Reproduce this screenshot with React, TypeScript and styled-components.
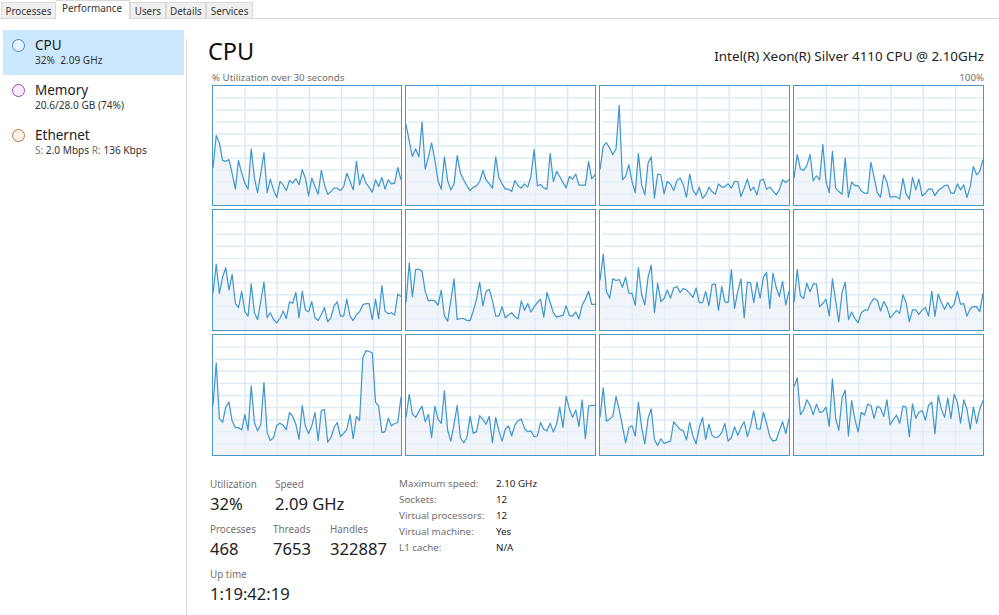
import * as React from 'react';
import styled, { createGlobalStyle } from 'styled-components';

const GlobalStyle = createGlobalStyle`
    html, body {
        margin: 0;
        padding: 0;
        background: #fff;
    }
    body {
        font-family: "Noto Sans", "Open Sans", "Liberation Sans", sans-serif;
    }
`;

const Dim = styled.span`
    color: #777;
`;

// sample values read off the reference, in thirds of a pixel from the top of each crop
const CORES: { base: number; ys: number[] }[] = [
    { base: 375, ys: [265,168,190,242,245,240,280,328,242,280,310,328,208,295,338,280,220,338,298,330,353,305,315,332,302,310,297,315,270,295,348,295,320,343,272,315,343,335,325,325,332,320,280,305,330,245,315,283,310,322,337,300,320,293,328,300,312,310,263,300] },
    { base: 375, ys: [135,185,230,208,232,128,268,232,190,240,303,328,232,303,330,312,228,280,300,318,332,322,318,305,272,300,312,325,232,293,312,328,328,335,302,318,325,312,322,290,210,318,314,324,328,222,305,275,290,308,324,290,298,283,316,316,316,246,297,285] },
    { base: 375, ys: [270,200,190,205,225,208,78,300,290,255,305,338,222,315,345,250,232,355,283,285,342,305,313,332,302,295,315,352,283,330,345,322,355,345,322,335,343,312,322,320,312,325,305,305,350,325,298,332,322,345,303,298,328,322,333,345,330,300,308,300] },
    { base: 375, ys: [295,225,268,272,258,225,303,288,300,195,305,338,215,325,335,343,235,352,307,317,317,333,340,340,248,293,338,352,285,305,352,350,350,357,296,342,358,293,330,298,348,340,328,327,347,332,325,317,316,340,340,312,330,315,353,320,260,285,275,240] },
    { base: 376, ys: [268,182,268,220,192,258,212,297,310,262,322,335,240,325,345,290,235,340,325,345,355,342,320,342,293,297,265,340,262,317,322,292,340,348,330,310,352,340,305,293,335,335,285,335,348,330,322,302,298,298,345,285,343,245,320,328,325,332,270,277] },
    { base: 376, ys: [295,178,278,197,197,203,262,290,288,290,303,258,335,350,290,225,345,342,342,348,348,320,285,235,305,262,256,290,335,335,307,340,332,325,337,343,290,318,298,323,308,295,285,338,265,295,325,338,335,333,305,333,335,323,343,302,285,262,300,300] },
    { base: 376, ys: [230,152,262,282,225,230,227,250,220,267,268,303,192,272,302,220,185,325,238,292,283,258,282,252,248,265,253,258,268,280,252,295,295,262,305,242,240,318,248,293,295,198,312,262,225,340,235,237,295,235,282,220,206,312,208,250,277,233,302,262] },
    { base: 376, ys: [295,198,275,283,238,263,240,240,308,297,285,335,225,290,352,265,235,345,323,342,355,325,317,318,295,283,288,320,292,308,340,330,318,327,272,295,352,317,317,330,317,310,335,262,335,270,295,315,295,312,300,262,300,298,335,313,307,307,322,268] },
    { base: 376, ys: [230,105,268,280,235,220,275,295,295,302,257,303,172,280,305,285,162,310,333,325,288,282,288,302,250,262,285,330,230,290,313,290,250,333,245,242,338,325,295,280,322,312,300,257,328,262,275,90,68,70,75,220,232,310,307,267,290,283,280,205] },
    { base: 376, ys: [265,197,255,265,248,232,278,256,325,232,270,283,187,303,335,285,230,325,340,325,262,312,307,260,272,285,262,340,265,305,335,300,290,320,287,275,270,298,307,305,322,320,280,300,305,282,308,285,235,295,203,240,265,243,292,213,328,232,230,230] },
    { base: 376, ys: [265,178,276,270,262,203,242,290,340,295,290,320,220,295,343,268,240,330,348,328,342,338,335,278,290,300,305,332,280,320,343,295,265,330,285,318,325,322,310,283,335,325,293,318,295,278,322,290,245,298,300,250,282,322,335,332,305,278,313,268] },
    { base: 376, ys: [175,148,257,243,213,230,257,226,250,248,235,292,152,268,303,207,185,320,215,270,308,250,258,226,230,268,232,238,262,213,287,272,258,282,232,235,322,225,268,250,245,273,230,220,313,200,240,265,208,268,197,220,282,213,240,300,235,282,240,215] },
];

const TABS = ['Processes', 'Performance', 'Users', 'Details', 'Services'];

const DEVICES = [
    { name: 'CPU', color: '#3c8fc8', fill: '#e6f1fa', active: true, detail: <>32%&nbsp; 2.09 GHz</> },
    { name: 'Memory', color: '#a83dbd', fill: '#f8eefa', active: false, detail: <>20.6/28.0 GB (74%)</> },
    {
        name: 'Ethernet',
        color: '#bb7434',
        fill: '#fbf3ea',
        active: false,
        detail: (
            <>
                <Dim>S:</Dim> 2.0 Mbps <Dim>R:</Dim> 136 Kbps
            </>
        ),
    },
];

const SPECS = [
    ['Maximum speed:', '2.10 GHz'],
    ['Sockets:', '12'],
    ['Virtual processors:', '12'],
    ['Virtual machine:', 'Yes'],
    ['L1 cache:', 'N/A'],
];

function CoreChart({ base, ys }: { base: number; ys: number[] }) {
    const W = 186;
    const H = 118;
    const pts = ys.map((y, i) => `${((i * W) / (ys.length - 1)).toFixed(1)},${(H - (base - y) / 3).toFixed(1)}`);
    return (
        <ChartBox>
            <svg width="100%" height="100%" viewBox={`0 0 ${W} ${H}`} preserveAspectRatio="none">
                {[1, 2, 3, 4, 5, 6, 7, 8, 9].map((n) => (
                    <line key={n} x1="2" x2={W} y1={n * 11.9} y2={n * 11.9} stroke="#dcebf6" strokeWidth="1.4" />
                ))}
                {[1, 2, 3, 4, 5].map((n) => (
                    <line key={n} x1={n * 31.8} x2={n * 31.8} y1="0" y2={H} stroke="#d8e9f6" strokeWidth="1.4" />
                ))}
                <polygon points={`0,${H} ${pts.join(' ')} ${W},${H}`} fill="#e9eff7" fillOpacity="0.65" />
                <polyline points={pts.join(' ')} fill="none" stroke="#3f97cc" strokeWidth="1.2" strokeLinejoin="round" />
            </svg>
        </ChartBox>
    );
}

export default function App() {
    return (
        <Window>
            <GlobalStyle />
            <TabBar>
                {TABS.map((t) => (
                    <Tab key={t} $active={t === 'Performance'}>
                        {t}
                    </Tab>
                ))}
            </TabBar>
            <Body>
                <Sidebar>
                    {DEVICES.map((d) => (
                        <Device key={d.name} $active={d.active}>
                            <Ring $color={d.color} $fill={d.fill} />
                            <div>
                                <DeviceName>{d.name}</DeviceName>
                                <DeviceDetail>{d.detail}</DeviceDetail>
                            </div>
                        </Device>
                    ))}
                </Sidebar>
                <Main>
                    <Header>
                        <Title>CPU</Title>
                        <Model>Intel(R) Xeon(R) Silver 4110 CPU @ 2.10GHz</Model>
                    </Header>
                    <Caption>
                        <span>% Utilization over 30 seconds</span>
                        <span>100%</span>
                    </Caption>
                    <ChartGrid>
                        {CORES.map((c, i) => (
                            <CoreChart key={i} base={c.base} ys={c.ys} />
                        ))}
                    </ChartGrid>
                    <Footer>
                        <Stats>
                            <StatRow>
                                <Stat $width={65}>
                                    <StatLabel>Utilization</StatLabel>
                                    <StatValue>32%</StatValue>
                                </Stat>
                                <Stat $width={100}>
                                    <StatLabel>Speed</StatLabel>
                                    <StatValue>2.09 GHz</StatValue>
                                </Stat>
                            </StatRow>
                            <StatRow>
                                <Stat $width={63}>
                                    <StatLabel>Processes</StatLabel>
                                    <StatValue>468</StatValue>
                                </Stat>
                                <Stat $width={57}>
                                    <StatLabel>Threads</StatLabel>
                                    <StatValue>7653</StatValue>
                                </Stat>
                                <Stat $width={65}>
                                    <StatLabel>Handles</StatLabel>
                                    <StatValue>322887</StatValue>
                                </Stat>
                            </StatRow>
                            <StatRow>
                                <Stat $width={100}>
                                    <StatLabel>Up time</StatLabel>
                                    <StatValue>1:19:42:19</StatValue>
                                </Stat>
                            </StatRow>
                        </Stats>
                        <Specs>
                            {SPECS.map(([k, v]) => (
                                <React.Fragment key={k}>
                                    <SpecKey>{k}</SpecKey>
                                    <SpecValue>{v}</SpecValue>
                                </React.Fragment>
                            ))}
                        </Specs>
                    </Footer>
                </Main>
            </Body>
        </Window>
    );
}

const Window = styled.div`
    width: 999px;
    height: 615px;
    overflow: hidden;
    background: #fff;
    color: #1a1a1a;
`;

const TabBar = styled.div`
    display: flex;
    align-items: flex-end;
    height: 19px;
    padding-left: 1px;
    border-bottom: 1px solid #d9d9d9;
    box-sizing: border-box;
`;

const Tab = styled.div<{ $active?: boolean }>`
    box-sizing: border-box;
    height: ${(p) => (p.$active ? 19 : 17)}px;
    margin-bottom: -1px;
    padding: ${(p) => (p.$active ? '0 7px 0 6px' : '0 3.5px')};
    font-size: 9.9px;
    line-height: ${(p) => (p.$active ? 15 : 16)}px;
    color: #333;
    white-space: nowrap;
    background: ${(p) => (p.$active ? '#fff' : '#f0f0f0')};
    border: 1px solid #d9d9d9;
    border-bottom: ${(p) => (p.$active ? 'none' : '1px solid #d9d9d9')};
    border-left: ${(p) => (p.$active ? 'none' : '1px solid #d9d9d9')};
`;

const Body = styled.div`
    display: flex;
    height: 596px;
`;

const Sidebar = styled.div`
    box-sizing: border-box;
    width: 187px;
    flex: none;
    padding: 11px 3px 0;
    position: relative;

    &::after {
        content: '';
        position: absolute;
        right: 0;
        top: 20px;
        bottom: 0;
        width: 1px;
        background: #d9d9d9;
    }
`;

const Device = styled.div<{ $active?: boolean }>`
    display: flex;
    align-items: flex-start;
    gap: 10px;
    width: 181px;
    height: 45px;
    box-sizing: border-box;
    padding: 7px 0 0 9px;
    background: ${(p) => (p.$active ? '#cce8ff' : 'transparent')};
`;

const Ring = styled.span<{ $color: string; $fill: string }>`
    box-sizing: border-box;
    flex: none;
    width: 13px;
    height: 13px;
    margin-top: 2px;
    border-radius: 50%;
    border: 1.5px solid ${(p) => p.$color};
    background: ${(p) => p.$fill};
`;

const DeviceName = styled.div`
    font-size: 13.5px;
    line-height: 17px;
    color: #222;
`;

const DeviceDetail = styled.div`
    font-size: 10.1px;
    line-height: 13px;
    color: #333;
    white-space: nowrap;
`;

const Main = styled.div`
    box-sizing: border-box;
    flex: 1;
    padding: 0 15px 0 25px;
    min-width: 0;
`;

const Header = styled.div`
    display: flex;
    justify-content: space-between;
    align-items: flex-end;
    height: 51px;
    margin-left: -4px;
`;

const Title = styled.div`
    font-size: 23.5px;
    line-height: 32px;
    margin-bottom: 3px;
    color: #111;
`;

const Model = styled.div`
    font-size: 13.4px;
    line-height: 18px;
    margin-bottom: 5px;
    color: #222;
`;

const Caption = styled.div`
    display: flex;
    justify-content: space-between;
    font-size: 9.7px;
    line-height: 15px;
    color: #707070;
`;

const ChartGrid = styled.div`
    display: grid;
    grid-template-columns: 190px 191px 191px 191px;
    grid-template-rows: 121px 122px 122px;
    gap: 3px;
`;

const ChartBox = styled.div`
    box-sizing: border-box;
    border: 1.5px solid #4a98c8;
    background: #fff;
    overflow: hidden;

    svg {
        display: block;
    }
`;

const Footer = styled.div`
    display: flex;
    margin: 21px 0 0 -2px;
`;

const Stats = styled.div`
    width: 189px;
    flex: none;
`;

const StatRow = styled.div`
    display: flex;
    height: 45px;
`;

const Stat = styled.div<{ $width: number }>`
    width: ${(p) => p.$width}px;
    flex: none;
    white-space: nowrap;
`;

const StatLabel = styled.div`
    font-size: 9.9px;
    line-height: 14px;
    color: #707070;
`;

const StatValue = styled.div`
    font-size: 16.6px;
    line-height: 26px;
    color: #222;
`;

const Specs = styled.div`
    display: grid;
    grid-template-columns: 97px auto;
    grid-auto-rows: 16px;
    align-content: start;
`;

const SpecKey = styled.div`
    font-size: 9.8px;
    line-height: 14px;
    color: #707070;
    white-space: nowrap;
`;

const SpecValue = styled.div`
    font-size: 9.8px;
    line-height: 14px;
    color: #222;
    white-space: nowrap;
`;
